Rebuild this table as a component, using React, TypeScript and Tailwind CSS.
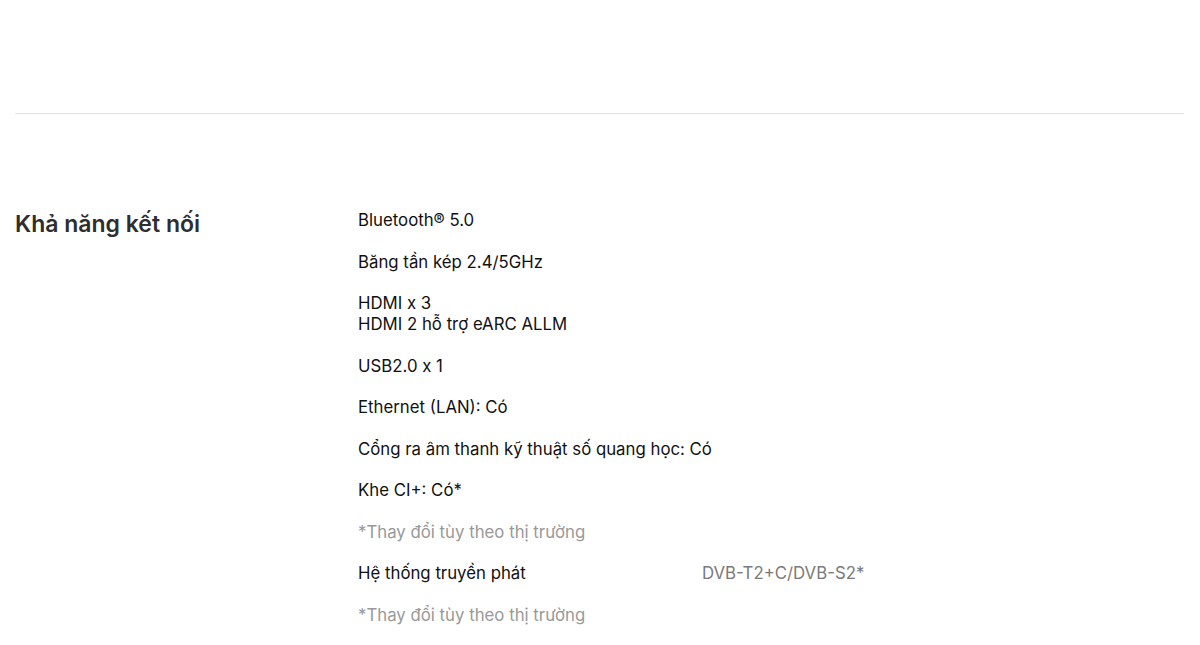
import React from "react";

const items: React.ReactNode[] = [
  <>Bluetooth® 5.0</>,
  <>Băng tần kép 2.4/5GHz</>,
  <>
    HDMI x 3
    <br />
    HDMI 2 hỗ trợ eARC ALLM
  </>,
  <>USB2.0 x 1</>,
  <>Ethernet (LAN): Có</>,
  <>Cổng ra âm thanh kỹ thuật số quang học: Có</>,
  <>Khe CI+: Có*</>,
];

export default function App() {
  return (
    <div
      className="w-[1200px] h-[645px] bg-white px-[15px] text-black overflow-hidden"
      style={{ fontFamily: "Inter, 'Noto Sans', sans-serif" }}
    >
      <div className="h-[113px]" />
      <div className="h-px bg-[#e3e3e3] w-[1169px]" />
      <div className="flex pt-[96px]">
        <div className="w-[343px] shrink-0">
          <h2 className="text-[23px] leading-[30px] font-semibold text-[#2e2e2e] -mt-[1px]">
            Khả năng kết nối
          </h2>
        </div>
        <div className="flex flex-col gap-[20.5px] text-[16.8px] leading-[21px] text-[#111]">
          {items.map((it, i) => (
            <div key={i}>{it}</div>
          ))}
          <div className="text-[#999]">*Thay đổi tùy theo thị trường</div>
          <div className="flex">
            <div className="w-[344px]">Hệ thống truyền phát</div>
            <div className="text-[#7a7a7a]">DVB-T2+C/DVB-S2*</div>
          </div>
          <div className="text-[#999]">*Thay đổi tùy theo thị trường</div>
        </div>
      </div>
    </div>
  );
}
